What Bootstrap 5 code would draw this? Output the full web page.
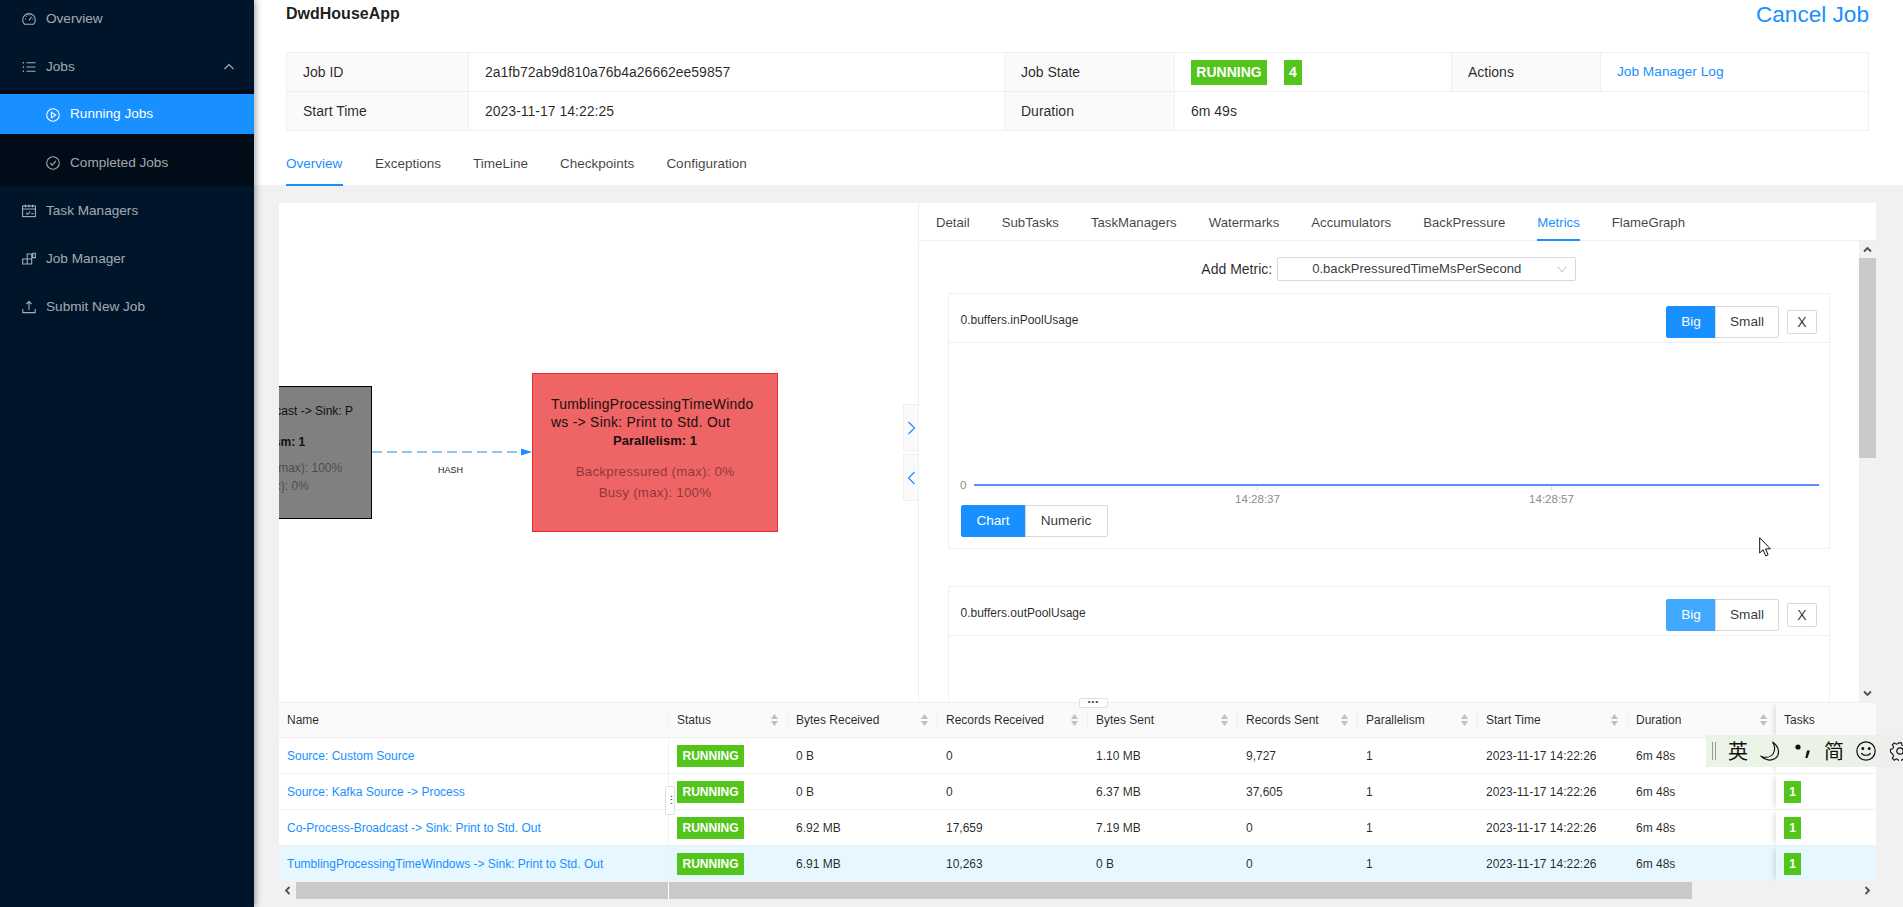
<!DOCTYPE html>
<html lang="en">
<head>
<meta charset="utf-8">
<title>DwdHouseApp</title>
<link href="https://cdn.jsdelivr.net/npm/bootstrap@5.3.0/dist/css/bootstrap.min.css" rel="stylesheet">
<style>
html,body{height:907px;overflow:hidden}
body{font-family:"Liberation Sans",Arial,sans-serif;font-size:14px;color:rgba(0,0,0,.85);background:#f1f1f1;position:relative}
a{text-decoration:none;color:#1890ff}
.app-shell{height:907px}
.side-bar{width:254px;flex:none;background:#001529;color:rgba(255,255,255,.65);box-shadow:2px 0 6px rgba(0,21,41,.35);z-index:2;font-size:13.6px}
.side-item{height:40px;padding-left:22px;gap:10px;color:rgba(255,255,255,.65)}
.side-item svg,.sub-item svg{width:14px;height:14px;flex:none}
.side-first{height:38px;margin-bottom:9px}
.side-sub{background:#000c17;margin-top:3px;padding:4px 0 3px;margin-bottom:5px}
.sub-item{height:40px;padding-left:46px;gap:10px;color:rgba(255,255,255,.65)}
.sub-item + .sub-item{margin-top:9px}
.sub-active{background:#1890ff;color:#fff;padding-top:1px}
.side-gap{margin-bottom:8px}
.side-chev{margin-right:18px}
.main-col{min-width:0}
.top-head{height:185px;background:#fff;padding:0 34px 0 32px;flex:none}
.title-row{height:52px}
.app-title{font-size:16px;font-weight:700;line-height:28px;color:rgba(0,0,0,.9)}
.cancel-lnk{font-size:22.6px;line-height:30px}
.info-tbl{table-layout:fixed;width:1582px;--bs-table-border-color:#f0f0f0;--bs-table-color:rgba(0,0,0,.85);margin:0}
.info-tbl td{height:39px;padding:0 16px;vertical-align:middle;font-size:14px}
.info-tbl td a{font-size:13.7px}
.info-tbl .lab{background:#fafafa}
.state-tag{background:#52c41a;color:#fff;font-weight:700;font-size:14px;height:25px;line-height:25px;padding:0;border-radius:0;display:inline-block;text-align:center}
.tag-a{width:76px}
.tag-b{width:18px;margin-left:17px}
.head-tabs{margin-top:11px;gap:32px}
.tab-lnk{display:block;height:44px;line-height:43px;color:rgba(0,0,0,.75);padding:0;font-size:13.5px}
.tab-on{color:#1890ff;border-bottom:2px solid #1890ff;min-width:57px}
.content-wrap{padding:18px 27px 8px 25px;min-height:0}
.content-box{background:#fff;min-height:0}
.upper-row{height:499px;flex:none}
.graph-pane{width:640px;flex:none;position:relative;overflow:hidden;background:#fff;border-right:1px solid #f0f0f0}
.job-node{position:absolute;text-align:center}
.node-gray{left:-134px;top:183px;width:227px;height:133px;background:#808080;border:1px solid #000;color:#111;font-size:12px;line-height:18px;white-space:nowrap}
.node-gray .ln1{position:absolute;right:18px;top:15px}
.node-gray .ln2{position:absolute;left:16px;right:0;top:46px;font-weight:700}
.node-gray .ln3{position:absolute;left:16px;right:0;top:72px;color:rgba(0,0,0,.45)}
.node-gray .ln4{position:absolute;left:16px;right:0;top:90px;color:rgba(0,0,0,.45)}
.node-red{left:253px;top:170px;width:246px;height:159px;background:#ef6464;border:1px solid #e8282e;color:#1a1010;padding-top:21px;font-size:13.9px}
.node-name{text-align:left;padding-left:18px;line-height:18px;white-space:nowrap;letter-spacing:.28px}
.node-par{font-weight:700;line-height:19px;margin-top:0;font-size:13px}
.node-stat{color:rgba(0,0,0,.45);line-height:21px;font-size:13.4px;letter-spacing:.2px}
.node-stat-first{margin-top:11px}
.edge-svg{position:absolute;left:93px;top:235px;width:160px;height:50px}
.edge-svg text{font:9px "Liberation Sans",Arial,sans-serif;fill:#222}
.fold-btn{position:absolute;left:624px;width:15px;height:47px;background:#fafafa;border:1px solid #f0f0f0;border-right:0}
.fold-a{top:201px}
.fold-b{top:251px}
.detail-pane{min-width:0}
.detail-tabs{height:38px;flex:none;padding-left:17px;gap:32px;border-bottom:1px solid #f0f0f0}
.dt-lnk{display:block;height:38px;line-height:40px;color:rgba(0,0,0,.75);font-size:13.2px}
.dt-on{color:#1890ff;border-bottom:2px solid #1890ff}
.detail-body{min-height:0}
.metric-scroll{overflow:hidden;padding:16px 29px 0 28.5px;min-width:0}
.add-row{height:24px;gap:5px;font-size:14px;flex:none}
.metric-sel{width:299px;height:24px;border:1px solid #d9d9d9;border-radius:2px;padding:0 8px 0 34px;font-size:13.1px;color:rgba(0,0,0,.8);flex:none}
.metric-card{--bs-card-border-color:#f0f0f0;--bs-card-border-radius:0;--bs-card-inner-border-radius:0;height:256px;margin-top:12px;flex:none;background:#fff}
.metric-card + .metric-card{margin-top:37px}
.metric-head{height:49px;background:#fff;border-bottom:1px solid #f0f0f0;padding:0 12px;font-size:12px;color:rgba(0,0,0,.85)}
.metric-name{margin-top:3px}
.metric-tools{margin-top:8px}
.metric-body{padding:0}
.chart-svg{display:block;width:881px;height:162px}
.chart-svg text{font:11.5px "Liberation Sans",Arial,sans-serif;fill:#8c8c8c}
.seg-btn{--bs-btn-padding-y:0;--bs-btn-padding-x:0;--bs-btn-font-size:13.6px;--bs-btn-border-radius:2px;--bs-btn-border-color:#d9d9d9;--bs-btn-color:rgba(0,0,0,.8);height:32px;line-height:30px;background:#fff}
.seg-on{background:#1890ff;border-color:#1890ff;color:#fff}
.seg-on.seg-lite{background:#40a9ff;border-color:#40a9ff}
.w-big{width:50px}
.w-small{width:64px}
.w-chart{width:65px}
.w-num{width:83px}
.x-btn{--bs-btn-padding-y:0;--bs-btn-padding-x:0;--bs-btn-font-size:14px;--bs-btn-border-color:#d9d9d9;--bs-btn-border-radius:2px;--bs-btn-color:rgba(0,0,0,.8);width:30px;height:24px;line-height:22px;margin-left:8px}
.chart-bar{padding-left:12px}
.vscroll{width:17px;flex:none;background:#f1f1f1}
.vs-arrow{height:17px;flex:none}
.vs-thumb{height:200px;background:#c9c9c9;flex:none}
.job-tbl{table-layout:fixed;width:1597px;margin:0;font-size:12px;border-collapse:separate;border-spacing:0;--bs-table-color:rgba(0,0,0,.85)}
.job-tbl th{background:#fafafa;font-weight:400;height:36px;padding:0;border-top:1px solid #f0f0f0;border-bottom:1px solid #f0f0f0;vertical-align:middle}
.job-tbl td{height:36px;padding:0 8px;border-bottom:1px solid #f0f0f0;vertical-align:middle;background:#fff;white-space:nowrap}
.job-tbl tr.row-sel td{background:#e6f7ff}
.job-tbl td.name-cell{border-right:1px solid #f0f0f0}
.th-in{height:20px;padding:0 8px;border-right:1px solid #f0f0f0}
.th-last{border-right:0}
.sort-ic{width:9px;height:14px;flex:none}
.job-tbl .task-cell{box-shadow:-5px 0 5px -3px rgba(0,0,0,.12)}
.run-tag{display:inline-block;background:#52c41a;color:#fff;font-weight:700;font-size:12px;height:22px;line-height:22px;width:67px;text-align:center;border-radius:0;padding:0}
.num-tag{width:17px}
.hscroll{height:17px;flex:none;background:#f1f1f1}
.hs-arrow{width:17px;flex:none}
.hs-thumb{width:1396px;background:#c9c9c9;flex:none}
.hs-fixed{width:373px;border-right:1px solid #fff;flex:none}
.drag-h{position:absolute;left:1079px;top:698px;width:29px;height:10px;background:#fff;border:1px solid #e0e0e0;border-radius:2px;z-index:3;font-size:8px;line-height:6px;text-align:center;color:#444;letter-spacing:1px}
.drag-v{position:absolute;left:665px;top:786px;width:10px;height:29px;background:#fff;border:1px solid #e0e0e0;border-radius:2px;z-index:3;color:#333;font-size:11px;line-height:27px;text-align:center}
.ime-bar{position:absolute;left:1706px;top:735px;width:197px;height:32px;overflow:hidden;background:linear-gradient(90deg,#ebf3e6,#eaf3e5 50%,#eeeeee);z-index:4;padding-left:6px;gap:12px;font-family:"Noto Sans CJK SC","Liberation Sans",sans-serif;font-size:20px;color:#111;white-space:nowrap}
.ime-grip{width:4px;height:18px;border-left:1px solid #999;border-right:1px solid #999;flex:none}
.ime-ic{width:20px;height:20px;flex:none}
.ime-gear{margin-left:2px}
.ime-txt{width:20px;line-height:20px;flex:none}
.mouse-ptr{position:absolute;left:1759px;top:537px;width:13px;height:20px;z-index:5}
</style>
</head>
<body>
<div class="app-shell d-flex">
  <aside class="side-bar d-flex flex-column">
    <a class="side-item side-first d-flex align-items-center" href="#"><svg viewBox="0 0 14 14" fill="none" stroke="currentColor" stroke-width="1.1"><path d="M2.4 12.2A6.3 6.3 0 1 1 11.6 12.2Z"/><path d="M7 8.4 9.6 4.8M3 7h1M10.2 7h1M7 2.6v1M3.9 3.9l.7.7"/></svg><span>Overview</span></a>
    <a class="side-item d-flex align-items-center" href="#"><svg viewBox="0 0 14 14" fill="none" stroke="currentColor" stroke-width="1.1"><path d="M4.5 2.8H13.5M4.5 7H13.5M4.5 11.2H13.5"/><path d="M.8 2.8H2M.8 7H2M.8 11.2H2" stroke-width="1.6"/></svg><span>Jobs</span><svg class="ms-auto side-chev" viewBox="0 0 14 14" fill="none" stroke="currentColor" stroke-width="1.2"><path d="M2.5 9 7 4.6 11.5 9"/></svg></a>
    <div class="side-sub">
      <a class="sub-item sub-active d-flex align-items-center" href="#"><svg viewBox="0 0 14 14" fill="none" stroke="currentColor" stroke-width="1.1"><circle cx="7" cy="7" r="6.3"/><path d="M5.4 4.3v5.4L9.6 7Z"/></svg><span>Running Jobs</span></a>
      <a class="sub-item d-flex align-items-center" href="#"><svg viewBox="0 0 14 14" fill="none" stroke="currentColor" stroke-width="1.1"><circle cx="7" cy="7" r="6.3"/><path d="M4.2 7.2 6.2 9.2 9.9 4.9"/></svg><span>Completed Jobs</span></a>
    </div>
    <a class="side-item side-gap d-flex align-items-center" href="#"><svg viewBox="0 0 14 14" fill="none" stroke="currentColor" stroke-width="1.1"><rect x=".6" y="2" width="12.8" height="10.6"/><path d="M.6 5h12.8M3.5.8v2.4M7 .8v2.4M10.5.8v2.4M4 8.8l1.6 1.5L8.2 7.6M9.4 9.6h2"/></svg><span>Task Managers</span></a>
    <a class="side-item side-gap d-flex align-items-center" href="#"><svg viewBox="0 0 14 14" fill="none" stroke="currentColor" stroke-width="1.1"><path d="M.7 7h4.5v5H.7ZM5.2 7h4.5v5H5.2ZM5.2 2h4.5v5H5.2ZM10.8 1.2h2.6v4.4h-2.6Z"/></svg><span>Job Manager</span></a>
    <a class="side-item d-flex align-items-center" href="#"><svg viewBox="0 0 14 14" fill="none" stroke="currentColor" stroke-width="1.1"><path d="M7 10V1.5M4.4 4 7 1.5 9.6 4M.8 9v3.6h12.4V9"/></svg><span>Submit New Job</span></a>
  </aside>

  <main class="main-col flex-grow-1 d-flex flex-column">
    <header class="top-head">
      <div class="title-row d-flex justify-content-between align-items-start">
        <div class="app-title">DwdHouseApp</div>
        <a class="cancel-lnk" href="#">Cancel Job</a>
      </div>
      <table class="table table-bordered info-tbl">
        <colgroup><col style="width:182px"><col style="width:536px"><col style="width:170px"><col style="width:277px"><col style="width:149px"><col style="width:268px"></colgroup>
        <tr>
          <td class="lab">Job ID</td><td>2a1fb72ab9d810a76b4a26662ee59857</td>
          <td class="lab">Job State</td><td><span class="state-tag tag-a">RUNNING</span><span class="state-tag tag-b">4</span></td>
          <td class="lab">Actions</td><td><a href="#">Job Manager Log</a></td>
        </tr>
        <tr>
          <td class="lab">Start Time</td><td>2023-11-17 14:22:25</td>
          <td class="lab">Duration</td><td colspan="3">6m 49s</td>
        </tr>
      </table>
      <nav class="nav head-tabs">
        <a class="tab-lnk tab-on" href="#">Overview</a>
        <a class="tab-lnk" href="#">Exceptions</a>
        <a class="tab-lnk" href="#">TimeLine</a>
        <a class="tab-lnk" href="#">Checkpoints</a>
        <a class="tab-lnk" href="#">Configuration</a>
      </nav>
    </header>

    <div class="content-wrap flex-grow-1 d-flex flex-column">
      <section class="content-box d-flex flex-column">
        <div class="upper-row d-flex">
          <div class="graph-pane">
            <div class="job-node node-gray">
              <div class="ln1">Co-Process-Broadcast -&gt; Sink: P</div>
              <div class="ln2">Parallelism: 1</div>
              <div class="ln3">Backpressured (max): 100%</div>
              <div class="ln4">Busy (max): 0%</div>
            </div>
            <svg class="edge-svg" viewBox="0 0 160 50">
              <line x1="0" y1="14" x2="148" y2="14" stroke="#1890ff" stroke-width="1.2" stroke-dasharray="10 5"/>
              <path d="M149 10.5 160 14 149 17.5Z" fill="#1890ff"/>
              <text x="66" y="35">HASH</text>
            </svg>
            <div class="job-node node-red">
              <div class="node-name">TumblingProcessingTimeWindo<br>ws -&gt; Sink: Print to Std. Out</div>
              <div class="node-par">Parallelism: 1</div>
              <div class="node-stat node-stat-first">Backpressured (max): 0%</div>
              <div class="node-stat">Busy (max): 100%</div>
            </div>
            <div class="fold-btn fold-a d-flex align-items-center justify-content-center"><svg width="9" height="14" viewBox="0 0 9 14" fill="none" stroke="#1890ff" stroke-width="1.2"><path d="M1.5 1 7.5 7 1.5 13"/></svg></div>
            <div class="fold-btn fold-b d-flex align-items-center justify-content-center"><svg width="9" height="14" viewBox="0 0 9 14" fill="none" stroke="#1890ff" stroke-width="1.2"><path d="M7.5 1 1.5 7 7.5 13"/></svg></div>
          </div>
          <div class="detail-pane flex-grow-1 d-flex flex-column">
            <nav class="nav detail-tabs">
              <a class="dt-lnk" href="#">Detail</a>
              <a class="dt-lnk" href="#">SubTasks</a>
              <a class="dt-lnk" href="#">TaskManagers</a>
              <a class="dt-lnk" href="#">Watermarks</a>
              <a class="dt-lnk" href="#">Accumulators</a>
              <a class="dt-lnk" href="#">BackPressure</a>
              <a class="dt-lnk dt-on" href="#">Metrics</a>
              <a class="dt-lnk" href="#">FlameGraph</a>
            </nav>
            <div class="detail-body flex-grow-1 d-flex">
              <div class="metric-scroll flex-grow-1 d-flex flex-column">
                <div class="add-row d-flex justify-content-center align-items-center">
                  <span>Add Metric:</span>
                  <div class="metric-sel d-flex align-items-center justify-content-between"><span>0.backPressuredTimeMsPerSecond</span><svg width="10" height="10" viewBox="0 0 10 10" fill="none" stroke="#bfbfbf"><path d="M.8 2.5 5 8 9.2 2.5"/></svg></div>
                </div>
                <div class="card metric-card">
                  <div class="card-header metric-head d-flex align-items-center justify-content-between">
                    <span class="metric-name">0.buffers.inPoolUsage</span>
                    <div class="metric-tools d-flex align-items-center">
                      <div class="btn-group"><button class="btn seg-btn seg-on w-big">Big</button><button class="btn seg-btn w-small">Small</button></div>
                      <button class="btn x-btn">X</button>
                    </div>
                  </div>
                  <div class="card-body metric-body">
                    <svg class="chart-svg" viewBox="0 0 881 162">
                      <text x="11" y="146">0</text>
                      <line x1="25" y1="142" x2="870" y2="142" stroke="#5b8ff9" stroke-width="2"/>
                      <line x1="308.5" y1="143" x2="308.5" y2="147" stroke="#d9d9d9"/>
                      <line x1="602.5" y1="143" x2="602.5" y2="147" stroke="#d9d9d9"/>
                      <text x="308.5" y="159.5" text-anchor="middle">14:28:37</text>
                      <text x="602.5" y="159.5" text-anchor="middle">14:28:57</text>
                    </svg>
                    <div class="chart-bar"><div class="btn-group"><button class="btn seg-btn seg-on w-chart">Chart</button><button class="btn seg-btn w-num">Numeric</button></div></div>
                  </div>
                </div>
                <div class="card metric-card">
                  <div class="card-header metric-head d-flex align-items-center justify-content-between">
                    <span class="metric-name">0.buffers.outPoolUsage</span>
                    <div class="metric-tools d-flex align-items-center">
                      <div class="btn-group"><button class="btn seg-btn seg-on seg-lite w-big">Big</button><button class="btn seg-btn w-small">Small</button></div>
                      <button class="btn x-btn">X</button>
                    </div>
                  </div>
                </div>
              </div>
              <div class="vscroll d-flex flex-column">
                <div class="vs-arrow d-flex align-items-center justify-content-center"><svg width="9" height="7" viewBox="0 0 9 7" fill="none" stroke="#505050" stroke-width="1.8"><path d="M1 5.5 4.5 2 8 5.5"/></svg></div>
                <div class="vs-thumb"></div>
                <div class="flex-grow-1"></div>
                <div class="vs-arrow d-flex align-items-center justify-content-center"><svg width="9" height="7" viewBox="0 0 9 7" fill="none" stroke="#505050" stroke-width="1.8"><path d="M1 1.5 4.5 5 8 1.5"/></svg></div>
              </div>
            </div>
          </div>
        </div>

        <table class="table job-tbl">
          <colgroup><col style="width:390px"><col style="width:119px"><col style="width:150px"><col style="width:150px"><col style="width:150px"><col style="width:120px"><col style="width:120px"><col style="width:150px"><col style="width:148px"><col style="width:100px"></colgroup>
          <thead><tr>
            <th><div class="th-in d-flex align-items-center">Name</div></th>
            <th><div class="th-in d-flex align-items-center justify-content-between">Status<svg class="sort-ic" viewBox="0 0 9 14"><path d="M4.5 1 8 6H1Z M1 8H8L4.5 13Z" fill="#bfbfbf"/></svg></div></th>
            <th><div class="th-in d-flex align-items-center justify-content-between">Bytes Received<svg class="sort-ic" viewBox="0 0 9 14"><path d="M4.5 1 8 6H1Z M1 8H8L4.5 13Z" fill="#bfbfbf"/></svg></div></th>
            <th><div class="th-in d-flex align-items-center justify-content-between">Records Received<svg class="sort-ic" viewBox="0 0 9 14"><path d="M4.5 1 8 6H1Z M1 8H8L4.5 13Z" fill="#bfbfbf"/></svg></div></th>
            <th><div class="th-in d-flex align-items-center justify-content-between">Bytes Sent<svg class="sort-ic" viewBox="0 0 9 14"><path d="M4.5 1 8 6H1Z M1 8H8L4.5 13Z" fill="#bfbfbf"/></svg></div></th>
            <th><div class="th-in d-flex align-items-center justify-content-between">Records Sent<svg class="sort-ic" viewBox="0 0 9 14"><path d="M4.5 1 8 6H1Z M1 8H8L4.5 13Z" fill="#bfbfbf"/></svg></div></th>
            <th><div class="th-in d-flex align-items-center justify-content-between">Parallelism<svg class="sort-ic" viewBox="0 0 9 14"><path d="M4.5 1 8 6H1Z M1 8H8L4.5 13Z" fill="#bfbfbf"/></svg></div></th>
            <th><div class="th-in d-flex align-items-center justify-content-between">Start Time<svg class="sort-ic" viewBox="0 0 9 14"><path d="M4.5 1 8 6H1Z M1 8H8L4.5 13Z" fill="#bfbfbf"/></svg></div></th>
            <th><div class="th-in th-last d-flex align-items-center justify-content-between">Duration<svg class="sort-ic" viewBox="0 0 9 14"><path d="M4.5 1 8 6H1Z M1 8H8L4.5 13Z" fill="#bfbfbf"/></svg></div></th>
            <th class="task-cell"><div class="th-in th-last d-flex align-items-center">Tasks</div></th>
          </tr></thead>
          <tbody>
            <tr><td class="name-cell"><a href="#">Source: Custom Source</a></td><td><span class="run-tag">RUNNING</span></td><td>0 B</td><td>0</td><td>1.10 MB</td><td>9,727</td><td>1</td><td>2023-11-17 14:22:26</td><td>6m 48s</td><td class="task-cell"><span class="run-tag num-tag">1</span></td></tr>
            <tr><td class="name-cell"><a href="#">Source: Kafka Source -&gt; Process</a></td><td><span class="run-tag">RUNNING</span></td><td>0 B</td><td>0</td><td>6.37 MB</td><td>37,605</td><td>1</td><td>2023-11-17 14:22:26</td><td>6m 48s</td><td class="task-cell"><span class="run-tag num-tag">1</span></td></tr>
            <tr><td class="name-cell"><a href="#">Co-Process-Broadcast -&gt; Sink: Print to Std. Out</a></td><td><span class="run-tag">RUNNING</span></td><td>6.92 MB</td><td>17,659</td><td>7.19 MB</td><td>0</td><td>1</td><td>2023-11-17 14:22:26</td><td>6m 48s</td><td class="task-cell"><span class="run-tag num-tag">1</span></td></tr>
            <tr class="row-sel"><td class="name-cell"><a href="#">TumblingProcessingTimeWindows -&gt; Sink: Print to Std. Out</a></td><td><span class="run-tag">RUNNING</span></td><td>6.91 MB</td><td>10,263</td><td>0 B</td><td>0</td><td>1</td><td>2023-11-17 14:22:26</td><td>6m 48s</td><td class="task-cell"><span class="run-tag num-tag">1</span></td></tr>
          </tbody>
        </table>
        <div class="hscroll d-flex">
          <div class="hs-arrow d-flex align-items-center justify-content-center"><svg width="7" height="9" viewBox="0 0 7 9" fill="none" stroke="#505050" stroke-width="1.8"><path d="M5.5 1 2 4.5 5.5 8"/></svg></div>
          <div class="hs-thumb d-flex"><div class="hs-fixed"></div></div>
          <div class="flex-grow-1"></div>
          <div class="hs-arrow d-flex align-items-center justify-content-center"><svg width="7" height="9" viewBox="0 0 7 9" fill="none" stroke="#505050" stroke-width="1.8"><path d="M1.5 1 5 4.5 1.5 8"/></svg></div>
        </div>
      </section>
    </div>
  </main>
</div>

<div class="drag-h">•••</div>
<div class="drag-v">⋮</div>

<div class="ime-bar d-flex align-items-center">
  <span class="ime-grip"></span>
  <span class="ime-txt">英</span>
  <svg class="ime-ic" viewBox="0 0 20 20" fill="none" stroke="#111" stroke-width="1.2"><path d="M12.5 1C15 4 15.5 9 13 13 10.8 16 6 17 1.5 15.5 5 19.5 11 20 15 17.5 20 14 20 6 12.5 1Z"/></svg>
  <svg class="ime-ic" viewBox="0 0 20 20" fill="#111"><circle cx="6" cy="6" r="2.6"/><path d="M15 9.5h3L15.5 17h-2.2Z"/></svg>
  <span class="ime-txt">简</span>
  <svg class="ime-ic" viewBox="0 0 20 20" fill="none" stroke="#111" stroke-width="1.2"><circle cx="10" cy="10" r="9.2"/><circle cx="6.8" cy="7.6" r=".9" fill="#111"/><circle cx="13.2" cy="7.6" r=".9" fill="#111"/><path d="M5.5 12c1.2 3 7.8 3 9 0"/></svg>
  <svg class="ime-ic ime-gear" viewBox="0 0 20 20" fill="none" stroke="#111" stroke-width="1.2"><circle cx="10" cy="10" r="3.2"/><path d="M8.4 1h3.2l.5 2.6 2.1.9 2.2-1.5 2.2 2.2-1.5 2.2.9 2.1 2.6.5v3.2l-2.6.5-.9 2.1 1.5 2.2-2.2 2.2-2.2-1.5-2.1.9-.5 2.6H8.4l-.5-2.6-2.1-.9-2.2 1.5-2.2-2.2 1.5-2.2-.9-2.1L-.6 11V8l2.6-.5.9-2.1L1.4 3.2 3.6 1l2.2 1.5 2.1-.9Z" transform="translate(1 1) scale(.9)"/></svg>
</div>

<svg class="mouse-ptr" viewBox="0 0 13 20"><path d="M.7.7V16l3.5-3.2 2.4 6 2.5-1-2.5-5.9h4.8Z" fill="#fff" stroke="#111"/></svg>

<script src="https://cdn.jsdelivr.net/npm/bootstrap@5.3.0/dist/js/bootstrap.bundle.min.js"></script>
</body>
</html>
